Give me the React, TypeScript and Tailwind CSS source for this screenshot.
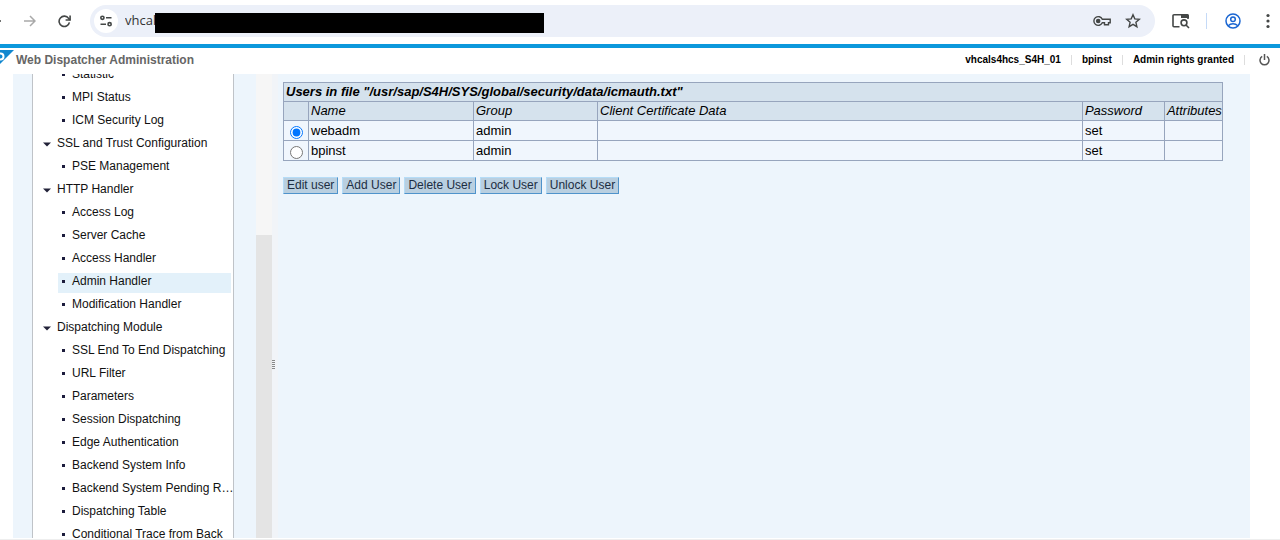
import { useState } from 'react';

const treeItems = [
  { label: 'Statistic', level: 2 },
  { label: 'MPI Status', level: 2 },
  { label: 'ICM Security Log', level: 2 },
  { label: 'SSL and Trust Configuration', level: 1 },
  { label: 'PSE Management', level: 2 },
  { label: 'HTTP Handler', level: 1 },
  { label: 'Access Log', level: 2 },
  { label: 'Server Cache', level: 2 },
  { label: 'Access Handler', level: 2 },
  { label: 'Admin Handler', level: 2 },
  { label: 'Modification Handler', level: 2 },
  { label: 'Dispatching Module', level: 1 },
  { label: 'SSL End To End Dispatching', level: 2 },
  { label: 'URL Filter', level: 2 },
  { label: 'Parameters', level: 2 },
  { label: 'Session Dispatching', level: 2 },
  { label: 'Edge Authentication', level: 2 },
  { label: 'Backend System Info', level: 2 },
  { label: 'Backend System Pending R…', level: 2 },
  { label: 'Dispatching Table', level: 2 },
  { label: 'Conditional Trace from Back', level: 2 },
];

const users = [
  { name: 'webadm', group: 'admin', certificate: '', password: 'set', attributes: '' },
  { name: 'bpinst', group: 'admin', certificate: '', password: 'set', attributes: '' },
];

const actions = ['Edit user', 'Add User', 'Delete User', 'Lock User', 'Unlock User'];

function BrowserBar() {
  return (
    <div className="flex h-11 shrink-0 items-center bg-white pb-0.5 text-[#444746]">
      <button type="button" aria-label="Back" className="-ml-4 w-4">
        <svg width="17" height="16" viewBox="0 0 17 16" fill="none" stroke="currentColor" strokeWidth="1.6">
          <path d="M17 8H4M10 2L4 8l6 6" />
        </svg>
      </button>
      <button type="button" aria-label="Forward" className="ml-6 text-[#a9a9a9]">
        <svg width="12" height="12" viewBox="0 0 12 12" fill="none" stroke="currentColor" strokeWidth="1.5">
          <path d="M0 6h11M6 1l5 5-5 5" />
        </svg>
      </button>
      <button type="button" aria-label="Reload" className="ml-[22px]">
        <svg width="13" height="13" viewBox="0 0 13 13" fill="none" stroke="currentColor" strokeWidth="1.6">
          <path d="M11.4 7.4A5.2 5.2 0 1 1 10.6 3.4L12 5" />
          <path d="M12.1 0.5v4.5H7.6" />
        </svg>
      </button>
      <div className="ml-[19px] flex h-8 min-w-0 flex-1 items-center rounded-full bg-[#ecf0f9] pl-1">
        <button type="button" aria-label="Site information" className="flex size-6 items-center justify-center rounded-full bg-white">
          <svg width="12" height="12" viewBox="0 0 12 12" fill="none" stroke="currentColor" strokeWidth="1.6">
            <circle cx="2.4" cy="2.8" r="1.6" />
            <path d="M6 2.8h5.5M0.5 9.2H6" />
            <circle cx="9.6" cy="9.2" r="1.6" />
          </svg>
        </button>
        <input
          aria-label="Address"
          defaultValue="vhcal"
          className="ml-[7px] w-[30px] bg-transparent font-['Open_Sans',sans-serif] text-[13px] text-[#333] outline-none"
        />
        <div className="mt-1 h-5 w-[389px] bg-black" />
        <button type="button" aria-label="Passwords" className="ml-auto">
          <svg width="18" height="12" viewBox="0 0 18 12" fill="none" stroke="currentColor" strokeWidth="1.4">
            <path d="M9.3 4.2A4.4 4.4 0 1 0 9.3 7.8H11.5V9.8H15.5V7.8H17.2V4.2Z" />
            <circle cx="5.2" cy="6" r="1.6" fill="currentColor" />
          </svg>
        </button>
        <button type="button" aria-label="Bookmark" className="mr-3.5 ml-3.5">
          <svg width="16" height="16" viewBox="0 0 16 16" fill="none" stroke="currentColor" strokeWidth="1.4">
            <path d="M8 1.8l1.8 4.1 4.5.4-3.4 3 1 4.4L8 11.4l-3.9 2.3 1-4.4-3.4-3 4.5-.4z" />
          </svg>
        </button>
      </div>
      <button type="button" aria-label="Search tabs" className="ml-[17px]">
        <svg width="18" height="16" viewBox="0 0 18 16" fill="none" stroke="currentColor" strokeWidth="1.6">
          <path d="M7.5 13.8H2a1 1 0 0 1-1-1V2.8a1 1 0 0 1 1-1h13a1 1 0 0 1 1 1V6" />
          <path d="M9 1h6a2 2 0 0 1 2 2v2H9z" fill="currentColor" stroke="none" />
          <circle cx="12" cy="9.8" r="2.9" />
          <path d="M14 12l3 3" />
        </svg>
      </button>
      <div className="mx-4 h-4 w-px bg-[#c5daf7]" />
      <button type="button" aria-label="Profile" className="ml-0.5 text-[#1a66d2]">
        <svg width="16" height="16" viewBox="0 0 16 16" fill="none" stroke="currentColor" strokeWidth="1.5">
          <circle cx="8" cy="8" r="7" />
          <circle cx="8" cy="6.3" r="2.3" />
          <path d="M3.2 12.8c2.6-2.6 7-2.6 9.6 0" />
        </svg>
      </button>
      <button type="button" aria-label="Menu" className="mr-2.5 ml-[25px]">
        <svg width="4" height="16" viewBox="0 0 4 16" fill="currentColor">
          <circle cx="2" cy="2.5" r="1.6" />
          <circle cx="2" cy="8" r="1.6" />
          <circle cx="2" cy="13.5" r="1.6" />
        </svg>
      </button>
    </div>
  );
}

function Header() {
  return (
    <header className="flex h-[30px] shrink-0 items-center border-t-4 border-[#0c98dc] bg-white pb-0.5 text-[10px] font-bold text-black">
      <svg width="14" height="14" viewBox="0 0 14 14" className="mt-0.5 self-start">
        <path d="M0 0h14L0 14z" fill="#1187cf" />
        <circle cx="0.5" cy="6.5" r="3" fill="none" stroke="#fff" strokeWidth="2" />
      </svg>
      <h1 className="ml-0.5 text-xs text-[#666]">Web Dispatcher Administration</h1>
      <div className="ml-auto flex items-center leading-[10px]">
        <span className="pr-2.5">vhcals4hcs_S4H_01</span>
        <span className="border-l border-[#ddd] px-2.5">bpinst</span>
        <span className="border-x border-[#ddd] px-2.5">Admin rights granted</span>
      </div>
      <button type="button" aria-label="Log off" className="mr-2.5 ml-3.5 text-[#555]">
        <svg width="11" height="12" viewBox="0 0 11 12" fill="none" stroke="currentColor" strokeWidth="1.5">
          <path d="M3.2 2.4a4.5 4.5 0 1 0 4.6 0M5.5 0v6" />
        </svg>
      </button>
    </header>
  );
}

function NavTree() {
  const [selected, setSelected] = useState('Admin Handler');

  return (
    <nav className="mr-[22px] ml-[19px] flex-1 overflow-hidden border-x border-[#bfc3c8] bg-white">
      <ul className="-mt-2 flex flex-col gap-[3px] pr-0.5">
        {treeItems.map((item) => (
          <li key={item.label} className={item.level === 1 ? 'pl-2.5' : 'pl-[25px]'}>
            <a
              href="#"
              onClick={() => setSelected(item.label)}
              className={`flex h-5 text-xs leading-4 whitespace-nowrap text-[#111] ${
                selected === item.label ? 'bg-[#e3f1fa]' : ''
              }`}
            >
              {item.level === 1 ? (
                <svg width="14" height="16" viewBox="0 0 14 16" className="shrink-0">
                  <path d="M0 7.5h8l-4 4z" fill="#222238" />
                </svg>
              ) : (
                <svg width="14" height="16" viewBox="0 0 14 16" className="shrink-0">
                  <path d="M4 7h3v3h-3z" fill="#1c1c3c" />
                </svg>
              )}
              {item.label}
            </a>
          </li>
        ))}
      </ul>
    </nav>
  );
}

function UserTable() {
  const [current, setCurrent] = useState('webadm');

  return (
    <table className="w-full table-fixed border-collapse text-left text-[13px] leading-4 [&_td]:border [&_td]:border-[#97a5bd] [&_td]:px-0.5 [&_td]:pt-px [&_th]:border [&_th]:border-[#97a5bd] [&_th]:px-0.5">
      <colgroup>
        <col className="w-[25px]" />
        <col className="w-[165px]" />
        <col className="w-[124px]" />
        <col />
        <col className="w-[82px]" />
        <col className="w-[58px]" />
      </colgroup>
      <thead className="bg-[#d5e2ed] italic">
        <tr className="h-[19px]">
          <th colSpan={6} className="font-bold">Users in file "/usr/sap/S4H/SYS/global/security/data/icmauth.txt"</th>
        </tr>
        <tr className="h-[19px]">
          <th></th>
          <th className="font-normal">Name</th>
          <th className="font-normal">Group</th>
          <th className="font-normal">Client Certificate Data</th>
          <th className="font-normal">Password</th>
          <th className="font-normal">Attributes</th>
        </tr>
      </thead>
      <tbody className="bg-[#f0f6fd]">
        {users.map((user) => (
          <tr key={user.name} className="h-5">
            <td>
              <input
                type="radio"
                name="user"
                aria-label={user.name}
                checked={current === user.name}
                onChange={() => setCurrent(user.name)}
                className="mt-0.5 ml-1 block size-[13px]"
              />
            </td>
            <td>{user.name}</td>
            <td>{user.group}</td>
            <td>{user.certificate}</td>
            <td>{user.password}</td>
            <td>{user.attributes}</td>
          </tr>
        ))}
      </tbody>
    </table>
  );
}

export default function App() {
  return (
    <div className="flex h-screen flex-col overflow-hidden bg-white font-['Liberation_Sans',Arial,sans-serif] text-black">
      <BrowserBar />
      <Header />
      <div className="mr-[30px] mb-px ml-[13px] flex min-h-0 flex-1 bg-[#edf5fc]">
        <aside className="flex w-[259px] shrink-0">
          <NavTree />
          {/* Scrollbar */}
          <div className="flex w-4 flex-col bg-[#f6f6f6]">
            <div className="mt-[161px] flex-1 bg-[#e4e4e4]" />
          </div>
        </aside>
        {/* Splitter */}
        <div className="flex w-1.5 shrink-0 flex-col bg-[#f1f4f8] pt-[286px]">
          <div className="flex w-[3px] flex-col gap-px">
            <div className="h-px bg-[#888]" />
            <div className="h-px bg-[#888]" />
            <div className="h-px bg-[#888]" />
            <div className="h-px bg-[#888]" />
            <div className="h-px bg-[#888]" />
          </div>
        </div>
        <main className="min-w-0 flex-1 pt-2 pr-[27px] pl-[5px]">
          <UserTable />
          <div className="mt-4 flex gap-1">
            {actions.map((action) => (
              <button
                key={action}
                type="button"
                className="border border-t-[#b5dcf7] border-r-[#4f93cb] border-b-[#4f93cb] border-l-[#b5dcf7] bg-[#b9cfe0] px-[3px] text-xs leading-[15px] text-[#1c2d42]"
              >
                {action}
              </button>
            ))}
          </div>
        </main>
      </div>
      <div className="h-px shrink-0 bg-[#eee]" />
    </div>
  );
}
